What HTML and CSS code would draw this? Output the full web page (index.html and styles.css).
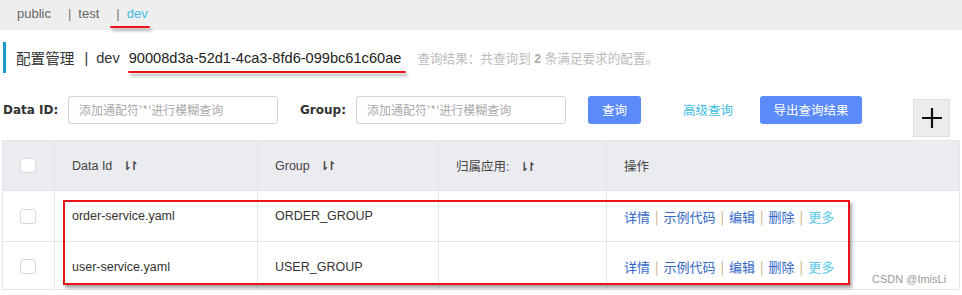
FILE: index.html
```html
<html>
<head>
<meta charset="utf-8">
<link rel="stylesheet" href="styles.css">
</head>
<body>

<div class="nsBar">
	<span class="ns">public</span>
	<span class="sep">|</span><span class="ns">test</span>
	<span class="sep">|</span><span class="ns active">dev</span>
	<div class="mark markNs"></div>
</div>

<div class="titleRow">
	<span class="title">配置管理</span>
	<span class="titleSep">|</span>
	<span class="title">dev</span>
	<span class="uuid">90008d3a-52d1-4ca3-8fd6-099bc61c60ae</span>
	<span class="result">查询结果：共查询到 <b>2</b> 条满足要求的配置。</span>
	<div class="mark markId"></div>
</div>

<div class="searchRow">
	<label class="lbl lblId">Data ID:</label>
	<div class="input">添加通配符'*'进行模糊查询</div>
	<label class="lbl lblGroup">Group:</label>
	<div class="input">添加通配符'*'进行模糊查询</div>
	<div class="btn btnQuery">查询</div>
	<a class="adv">高级查询</a>
	<div class="btn btnExport">导出查询结果</div>
	<div class="plus">
		<svg width="22" height="22" viewBox="0 0 22 22"><path d="M11 1V21M1 11H21" stroke="#111" stroke-width="2.2"/></svg>
	</div>
</div>

<div class="tableWrap">
<table class="grid">
	<tr class="head">
		<th class="colCheck"><span class="box"></span></th>
		<th class="colId">Data Id <span class="sort">⇂↾</span></th>
		<th class="colGroup">Group <span class="sort">⇂↾</span></th>
		<th class="colApp">归属应用: <span class="sort">⇂↾</span></th>
		<th class="colOps">操作</th>
	</tr>
	<tr class="row1">
		<td class="colCheck"><span class="box"></span></td>
		<td>order-service.yaml</td>
		<td>ORDER_GROUP</td>
		<td></td>
		<td class="ops"><a>详情</a><i>|</i><a>示例代码</a><i>|</i><a>编辑</a><i>|</i><a>删除</a><i>|</i><a class="more">更多</a></td>
	</tr>
	<tr class="row2">
		<td class="colCheck"><span class="box"></span></td>
		<td>user-service.yaml</td>
		<td>USER_GROUP</td>
		<td></td>
		<td class="ops"><a>详情</a><i>|</i><a>示例代码</a><i>|</i><a>编辑</a><i>|</i><a>删除</a><i>|</i><a class="more">更多</a></td>
	</tr>
</table>
<div class="mark markRows"></div>
<div class="watermark">CSDN @ImisLi</div>
</div>

</body>
</html>
```
FILE: styles.css
```css
body {
	margin: 0;
	width: 962px;
	height: 295px;
	overflow: hidden;
	background: #fff;
	font-family: "Liberation Sans", Arial, "Noto Sans CJK SC", sans-serif;
	color: #333;
}

.nsBar {
	position: relative;
	height: 30px;
	background: #eeeeee;
	display: flex;
	align-items: center;
	padding-left: 17px;
	font-size: 13px;
	color: #666;
	box-sizing: border-box;
	padding-bottom: 4px;
}

.ns {
	margin-right: 17px;
}

.sep {
	margin-right: 7px;
	color: #777;
}

.ns.active {
	color: #3dbde3;
}

.mark {
	position: absolute;
	border: 0 solid #e8141a;
	box-shadow: 2px 3px 3px rgba(0, 0, 0, 0.35);
}

.markNs {
	left: 110px;
	top: 26px;
	width: 40px;
	height: 2px;
	background: #e8141a;
	border-radius: 1px;
}

.titleRow {
	position: relative;
	margin: 12px 0 0 3px;
	height: 31px;
	border-left: 3px solid #1e98d4;
	display: flex;
	align-items: center;
	padding-left: 10px;
	font-size: 14.6px;
	color: #333;
}

.titleSep {
	margin: 0 8px 0 10px;
}

.uuid {
	margin-left: 9px;
	color: #222;
}

.result {
	margin-left: 16px;
	font-size: 12.6px;
	color: #bbb;
}

.result b {
	color: #aaa;
}

.markId {
	left: 122px;
	top: 29px;
	width: 278px;
	height: 2px;
	background: #e8141a;
	border-radius: 1px;
}

.searchRow {
	display: flex;
	align-items: flex-start;
	margin-top: 23px;
	height: 44px;
	font-size: 12px;
}

.lbl {
	font-family: "DejaVu Sans", Verdana, sans-serif;
	font-weight: bold;
	font-size: 12px;
	color: #333;
	line-height: 28px;
}

.lblId {
	margin-left: 3px;
	width: 65px;
}

.lblGroup {
	margin-left: 22px;
	width: 56px;
}

.input {
	width: 210px;
	height: 28px;
	box-sizing: border-box;
	border: 1px solid #d4d4d4;
	border-radius: 3px;
	padding-left: 10px;
	line-height: 26px;
	color: #aaa;
	font-family: "Noto Sans CJK SC", sans-serif;
	font-size: 12px;
}

.btn {
	height: 28px;
	line-height: 28px;
	background: #5b8af9;
	color: #fff;
	border-radius: 3px;
	text-align: center;
	font-family: "Noto Sans CJK SC", sans-serif;
	font-size: 12.5px;
}

.btnQuery {
	margin-left: 22px;
	width: 53px;
}

.adv {
	margin-left: 42px;
	line-height: 28px;
	color: #3dbde3;
	font-family: "Noto Sans CJK SC", sans-serif;
	font-size: 12.5px;
	width: 77px;
}

.btnExport {
	width: 102px;
}

.plus {
	margin: 3px 0 0 51px;
	width: 37px;
	height: 38px;
	box-sizing: border-box;
	background: #ececec;
	border: 1px solid #dedede;
	display: flex;
	align-items: center;
	justify-content: center;
}

.tableWrap {
	position: relative;
	margin: 0 0 0 2px;
	width: 958px;
}

.grid {
	width: 958px;
	border-collapse: collapse;
	table-layout: fixed;
	font-size: 12.5px;
}

.grid th,
.grid td {
	border: 1px solid #e4e5ea;
	text-align: left;
	padding: 0 0 0 17px;
	font-weight: normal;
	color: #333;
}

.head th {
	height: 50px;
	background: #ebecf0;
	color: #444;
}

.row1 td {
	height: 51px;
}

.row2 td {
	height: 48px;
	padding-top: 2px;
}

.grid .colCheck {
	width: 34px;
	padding-left: 17px;
}

.colId {
	width: 185px;
}

.colGroup {
	width: 163px;
}

.colApp {
	width: 150px;
}

.sort {
	margin-left: 6px;
	font-family: "DejaVu Sans", sans-serif;
	font-weight: bold;
	letter-spacing: -3px;
	color: #444;
	font-size: 12px;
}

.box {
	display: block;
	width: 16px;
	height: 15px;
	box-sizing: border-box;
	border: 1px solid #d8d9dc;
	border-radius: 3px;
	background: #fff;
}

.ops {
	font-family: "Noto Sans CJK SC", sans-serif;
	font-size: 13px;
}

.ops a {
	color: #3368c8;
}

.ops a.more {
	color: #5dc8e8;
}

.ops i {
	font-style: normal;
	color: #c9a574;
	margin: 0 5px;
}

.markRows {
	left: 61px;
	top: 60px;
	width: 783px;
	height: 81px;
	border-width: 2px;
}

.watermark {
	position: absolute;
	left: 870px;
	top: 133px;
	font-size: 11px;
	color: #9a9a9a;
}
```
